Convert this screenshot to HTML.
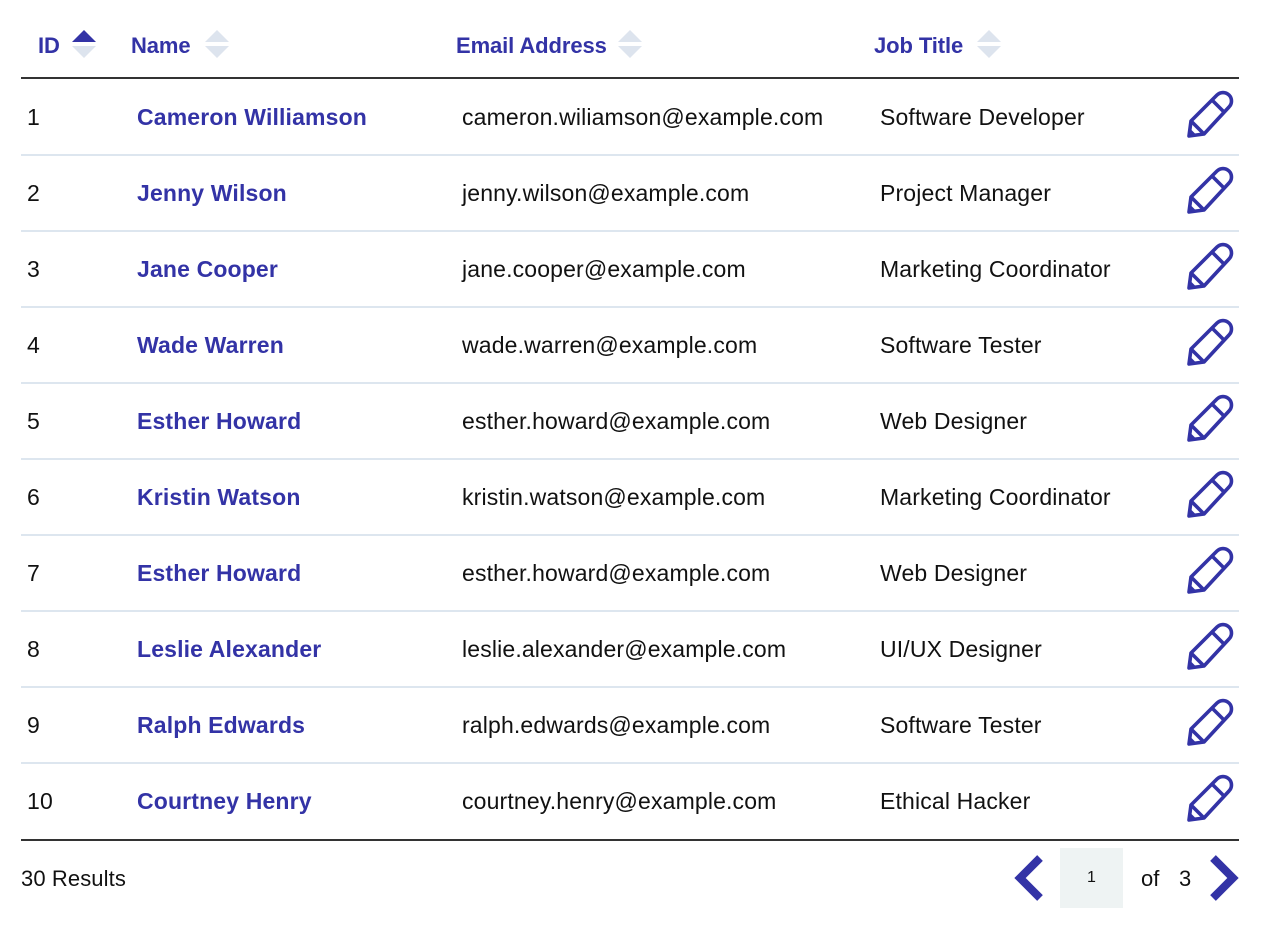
<!DOCTYPE html>
<html><head><style>
body{margin:0;background:#fff;font-family:"Liberation Sans",sans-serif;width:1280px;height:937px;position:relative;overflow:hidden;color:#111}
.a{position:absolute;white-space:nowrap}
.h{font-weight:bold;color:#3333a6;font-size:22px;letter-spacing:-0.1px;top:34px;line-height:24px}
.c{font-size:23px;line-height:24px;letter-spacing:0.15px}
.n{font-weight:bold;color:#3333a6}
.line{position:absolute;left:21px;width:1218px}
</style></head><body>
<div class="a h" style="left:38px">ID</div>
<div class="a h" style="left:131px">Name</div>
<div class="a h" style="left:456px">Email Address</div>
<div class="a h" style="left:874px">Job Title</div>
<svg class="a" style="left:72px;top:30px" width="24" height="30"><path d="M0 12L12 0L24 12Z" fill="#3333a6"/><path d="M0 16L24 16L12 28Z" fill="#dde4ee"/></svg>
<svg class="a" style="left:205px;top:30px" width="24" height="30"><path d="M0 12L12 0L24 12Z" fill="#dde4ee"/><path d="M0 16L24 16L12 28Z" fill="#dde4ee"/></svg>
<svg class="a" style="left:618px;top:30px" width="24" height="30"><path d="M0 12L12 0L24 12Z" fill="#dde4ee"/><path d="M0 16L24 16L12 28Z" fill="#dde4ee"/></svg>
<svg class="a" style="left:977px;top:30px" width="24" height="30"><path d="M0 12L12 0L24 12Z" fill="#dde4ee"/><path d="M0 16L24 16L12 28Z" fill="#dde4ee"/></svg>
<div class="line" style="top:77px;height:2px;background:#333"></div>
<div class="line" style="top:839px;height:2px;background:#333"></div>
<div id="rows"></div>
<div class="a" style="left:21px;top:867px;font-size:22px;letter-spacing:0.1px;line-height:24px">30 Results</div>
<svg class="a" style="left:1012px;top:854px" width="34" height="48"><path d="M28 4L8 24L28 44" fill="none" stroke="#3333a6" stroke-width="8"/></svg>
<div class="a" style="left:1060px;top:848px;width:63px;height:60px;background:#eef3f3;font-size:16px;text-align:center;line-height:60px">1</div>
<div class="a" style="left:1141px;top:867px;font-size:22px;line-height:24px">of</div>
<div class="a" style="left:1179px;top:867px;font-size:22px;line-height:24px">3</div>
<svg class="a" style="left:1207px;top:854px" width="34" height="48"><path d="M6 4L26 24L6 44" fill="none" stroke="#3333a6" stroke-width="8"/></svg>
<script>
var d=[["Cameron Williamson","cameron.wiliamson@example.com","Software Developer"],["Jenny Wilson","jenny.wilson@example.com","Project Manager"],["Jane Cooper","jane.cooper@example.com","Marketing Coordinator"],["Wade Warren","wade.warren@example.com","Software Tester"],["Esther Howard","esther.howard@example.com","Web Designer"],["Kristin Watson","kristin.watson@example.com","Marketing Coordinator"],["Esther Howard","esther.howard@example.com","Web Designer"],["Leslie Alexander","leslie.alexander@example.com","UI/UX Designer"],["Ralph Edwards","ralph.edwards@example.com","Software Tester"],["Courtney Henry","courtney.henry@example.com","Ethical Hacker"]];
var h="";
d.forEach(function(r,i){var y=117+76*i,t=y-12;
h+='<div class="a c" style="left:27px;top:'+t+'px">'+(i+1)+'</div>';
h+='<div class="a c n" style="left:137px;top:'+t+'px">'+r[0]+'</div>';
h+='<div class="a c" style="left:462px;top:'+t+'px">'+r[1]+'</div>';
h+='<div class="a c" style="left:880px;top:'+t+'px">'+r[2]+'</div>';
h+='<svg class="a" style="left:1185px;top:'+(y-27)+'px" width="50" height="50"><g fill="none" stroke="#3333a6" stroke-width="3.6" stroke-linejoin="round"><path d="M4 46L6 31L32 5a7 7 0 0 1 12 12L19 44Z"/><path d="M27 10L39 22M6 31L19 44"/></g><path d="M4 46L5.5 39L11 44.5Z" fill="#3333a6"/></svg>';
if(i<9)h+='<div class="line" style="top:'+(y+37)+'px;height:2px;background:#dde6ef"></div>';});
document.getElementById("rows").innerHTML=h;
</script>
</body></html>
